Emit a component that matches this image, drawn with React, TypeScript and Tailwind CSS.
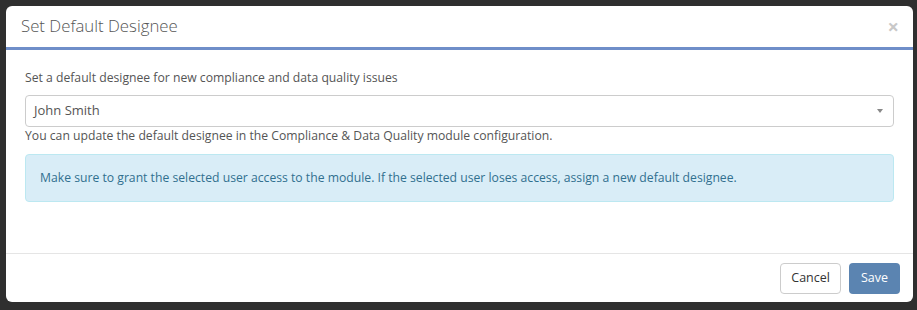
const App = () => {
  return (
    <div
      className="w-[917px] h-[310px] bg-[#2f2f2f] pt-[6px] pl-[6px] overflow-hidden"
      style={{ fontFamily: '"Open Sans", "Liberation Sans", sans-serif' }}
    >
      <div className="w-[907px] h-[296px] bg-white rounded-[6px] flex flex-col overflow-hidden">
        <div className="h-[44px] flex items-center justify-between pl-[15px] pr-[14px] border-b-[3px] border-[#6f8ec9]">
          <h4 className="text-[16.8px] font-light text-[#555] leading-none">Set Default Designee</h4>
          <button className="text-[#c8c8c8] text-[20px] leading-none font-bold">×</button>
        </div>
        <div className="flex-1 px-[19px] pt-[19px]">
          <label className="block text-[12.2px] leading-[17px] text-[#555] mb-[9px]">
            Set a default designee for new compliance and data quality issues
          </label>
          <div className="h-[32px] border border-[#ccc] rounded-[4px] flex items-center justify-between pl-[8px] pr-[10px]">
            <span className="text-[13px] text-[#555]">John Smith</span>
            <span className="w-0 h-0 border-l-[3px] border-r-[3px] border-t-[4px] border-l-transparent border-r-transparent border-t-[#888]" />
          </div>
          <p className="text-[12.2px] leading-[17px] text-[#555]">
            You can update the default designee in the Compliance &amp; Data Quality module configuration.
          </p>
          <div className="mt-[10px] h-[48px] bg-[#d9edf7] border border-[#bce8f1] rounded-[4px] flex items-center px-[14px]">
            <span className="text-[12.2px] text-[#31708f]">
              Make sure to grant the selected user access to the module. If the selected user loses access, assign a new default designee.
            </span>
          </div>
        </div>
        <div className="h-[49px] border-t border-[#e5e5e5] flex items-center justify-end gap-[8px] pr-[13px]">
          <button className="h-[31px] px-[10px] border border-[#ccc] rounded-[4px] bg-white text-[12.5px] text-[#333]">
            Cancel
          </button>
          <button className="h-[31px] px-[12px] rounded-[4px] bg-[#5b84b1] text-[12.5px] text-white">
            Save
          </button>
        </div>
      </div>
    </div>
  );
};

export default App;
